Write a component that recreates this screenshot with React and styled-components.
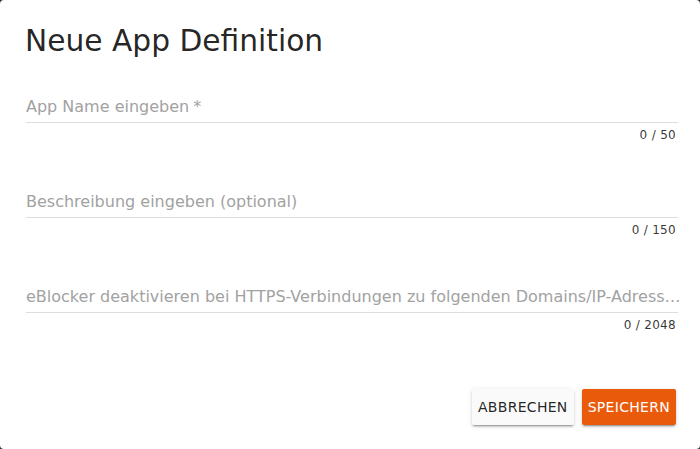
import React from 'react';
import styled, { createGlobalStyle } from 'styled-components';

const GlobalStyle = createGlobalStyle`
  html, body {
    margin: 0;
    padding: 0;
    background: #2b2b2b;
    font-family: "DejaVu Sans", Verdana, sans-serif;
  }
`;

const Dialog = styled.div`
  box-sizing: border-box;
  width: 700px;
  height: 449px;
  background: #fff;
  border-radius: 4px;
  padding: 23px 24px 24px 25px;
  display: flex;
  flex-direction: column;
  overflow: hidden;
`;

const Title = styled.h2`
  margin: 0;
  font-size: 29.7px;
  line-height: 36px;
  font-weight: 400;
  color: rgba(0, 0, 0, 0.87);
`;

const Fields = styled.div`
  margin-top: 37px;
  padding-left: 1px;
  display: flex;
  flex-direction: column;
`;

const Field = styled.div`
  height: 95px;
  display: flex;
  flex-direction: column;
`;

const InputLine = styled.div`
  padding-top: 1px;
  padding-bottom: 5px;
  border-bottom: 1px solid #dedede;
  margin-right: -2px;
`;

const Label = styled.div`
  font-size: 16px;
  line-height: 20px;
  color: #a2a2a2;
  white-space: nowrap;
  overflow: hidden;
  text-overflow: ellipsis;
  margin-right: ${(p) => (p.$wide ? '-4px' : '0')};
`;

const Star = styled.span`
  margin-left: 4px;
`;

const Counter = styled.div`
  margin-top: 5px;
  text-align: right;
  font-size: 12px;
  line-height: 14px;
  letter-spacing: 0.3px;
  color: rgba(0, 0, 0, 0.8);
`;

const Footer = styled.div`
  margin-top: auto;
  display: flex;
  justify-content: flex-end;
  gap: 8px;
`;

const Button = styled.button`
  height: 36px;
  padding: 0 6px;
  border: none;
  border-radius: 2px;
  font-family: inherit;
  font-size: 14px;
  letter-spacing: 0.3px;
  text-transform: uppercase;
  cursor: pointer;
  background: ${(p) => (p.$primary ? '#ea5a0b' : '#fafafa')};
  color: ${(p) => (p.$primary ? '#fff' : 'rgba(0, 0, 0, 0.87)')};
  box-shadow: 0 3px 1px -2px rgba(0, 0, 0, 0.2), 0 2px 2px 0 rgba(0, 0, 0, 0.14),
    0 1px 5px 0 rgba(0, 0, 0, 0.12);
`;

const fields = [
  { label: 'App Name eingeben', required: true, max: 50 },
  { label: 'Beschreibung eingeben (optional)', max: 150 },
  {
    label: 'eBlocker deaktivieren bei HTTPS-Verbindungen zu folgenden Domains/IP-Adressen',
    max: 2048,
    wide: true,
  },
];

export default function App() {
  return (
    <>
      <GlobalStyle />
      <Dialog>
        <Title>Neue App Definition</Title>
        <Fields>
          {fields.map((f) => (
            <Field key={f.label}>
              <InputLine>
                <Label $wide={f.wide}>
                  {f.label}
                  {f.required && <Star>*</Star>}
                </Label>
              </InputLine>
              <Counter>0 / {f.max}</Counter>
            </Field>
          ))}
        </Fields>
        <Footer>
          <Button>Abbrechen</Button>
          <Button $primary>Speichern</Button>
        </Footer>
      </Dialog>
    </>
  );
}
